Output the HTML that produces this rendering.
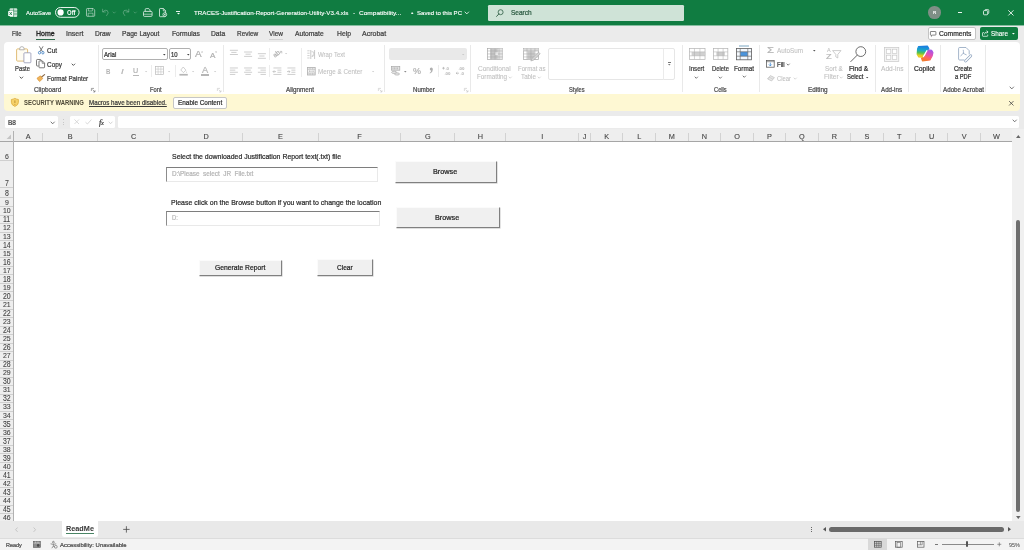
<!DOCTYPE html>
<html><head><meta charset="utf-8"><title>Excel</title>
<style>
html,body{margin:0;padding:0}
body{width:1024px;height:550px;overflow:hidden;position:relative;background:#ebebeb;font-family:"Liberation Sans",sans-serif;}
.t{position:absolute;white-space:pre;line-height:1;transform-origin:0 0;-webkit-text-stroke:0.22px currentColor;}
svg{overflow:visible}
</style></head><body>
<div id="app" style="position:absolute;left:0;top:0;width:1024px;height:550px;will-change:transform;">
<div style="position:absolute;left:0.00px;top:0.00px;width:1024.00px;height:25.00px;background:#107c41;"></div>
<div style="position:absolute;left:0.00px;top:25.00px;width:1024.00px;height:1.00px;background:#86bda0;"></div>
<svg style="position:absolute;left:8.00px;top:7.80px;" width="9.60" height="9.40" viewBox="0 0 9.6 9.4"><rect x="1.6" y=".3" width="7.6" height="8.6" rx="1" fill="#fff" opacity=".78"/>
<path d="M1.6 3.1H9.2M5.6 .3V8.9M5.6 6H9.2" stroke="#107c41" stroke-width=".7" opacity=".8"/>
<rect x=".2" y="2.9" width="5" height="5.2" rx=".7" fill="#fff"/>
<path d="M1.6 4.2L3.8 6.9M3.8 4.2L1.6 6.9" stroke="#107c41" stroke-width=".9"/></svg>
<span class="t" style="left:25.60px;top:10px;font-size:6.2px;color:#ffffff;transform:scaleX(0.9447);-webkit-text-stroke:0.12px currentColor;">AutoSave</span>
<svg style="position:absolute;left:55.00px;top:7.30px;" width="25.00" height="11.00" viewBox="0 0 25 11"><rect x=".5" y=".5" width="23.6" height="9.8" rx="4.9" fill="none" stroke="#fff" stroke-width=".9"/><circle cx="5.6" cy="5.4" r="3.1" fill="#fff"/></svg>
<span class="t" style="left:66.60px;top:10px;font-size:6.6px;color:#ffffff;transform:scaleX(0.9024);font-weight:bold;-webkit-text-stroke:0;">Off</span>
<svg style="position:absolute;left:85.80px;top:8.20px;" width="9.40" height="9.00" viewBox="0 0 9.4 9"><path d="M.5 1.3Q.5 .5 1.3 .5H7.2L8.7 2V7.5Q8.7 8.3 7.9 8.3H1.3Q.5 8.3 .5 7.5Z" fill="none" stroke="#fff" stroke-width=".8" opacity=".68"/>
<path d="M2.4 .6V3H6.4V.6M2.2 8.2V5.2H7V8.2" fill="none" stroke="#fff" stroke-width=".7" opacity=".6"/></svg>
<svg style="position:absolute;left:102.20px;top:8.40px;" width="7.40" height="8.60" viewBox="0 0 7.4 8.6"><path d="M.6 .8V4H3.8" fill="none" stroke="#fff" stroke-width=".8" opacity=".34"/><path d="M.9 3.8Q3 1.2 5.3 2.6Q7.6 4.6 4.4 7.9" fill="none" stroke="#fff" stroke-width=".8" opacity=".34"/></svg>
<svg style="position:absolute;left:111.80px;top:11.20px;" width="4.40" height="3.20" viewBox="0 0 4.4 3.2"><path d="M1 1 L2.20 2.20 L3.40 1" fill="none" stroke="rgba(255,255,255,.3)" stroke-width="0.70" stroke-linecap="round" stroke-linejoin="round"/></svg>
<svg style="position:absolute;left:122.40px;top:8.40px;" width="7.40" height="8.60" viewBox="0 0 7.4 8.6"><path d="M6.8 .8V4H3.6" fill="none" stroke="#fff" stroke-width=".8" opacity=".34"/><path d="M6.5 3.8Q4.4 1.2 2.1 2.6Q-.2 4.6 3 7.9" fill="none" stroke="#fff" stroke-width=".8" opacity=".34"/></svg>
<svg style="position:absolute;left:133.40px;top:11.20px;" width="4.40" height="3.20" viewBox="0 0 4.4 3.2"><path d="M1 1 L2.20 2.20 L3.40 1" fill="none" stroke="rgba(255,255,255,.3)" stroke-width="0.70" stroke-linecap="round" stroke-linejoin="round"/></svg>
<svg style="position:absolute;left:142.60px;top:8.00px;" width="9.60" height="9.00" viewBox="0 0 9.6 9"><path d="M2.2 3.4V1.6Q2.2 .6 3.2 .6H5.2Q6.2 .6 6.6 1.4L7.4 3.4" fill="none" stroke="#fff" stroke-width=".8" opacity=".9"/>
<rect x=".5" y="3.4" width="8.6" height="5" rx="1" fill="none" stroke="#fff" stroke-width=".8" opacity=".9"/><path d="M.6 6.2H9" stroke="#fff" stroke-width=".7" opacity=".8"/></svg>
<svg style="position:absolute;left:158.80px;top:8.00px;" width="8.60" height="9.20" viewBox="0 0 8.6 9.2"><path d="M.5 1.2Q.5 .5 1.2 .5H4.4L6.6 2.7V8Q6.6 8.7 5.9 8.7H1.2Q.5 8.7 .5 8Z" fill="none" stroke="#fff" stroke-width=".8" opacity=".9"/><path d="M4.3 .6V2.9H6.5" fill="none" stroke="#fff" stroke-width=".7" opacity=".9"/>
<circle cx="5.8" cy="6.6" r="1.9" fill="#107c41" stroke="#fff" stroke-width=".7"/><path d="M5.8 5.6V7.4M4.9 6.6H6.7" stroke="#fff" stroke-width=".6"/></svg>
<div style="position:absolute;left:176.40px;top:11.20px;width:3.80px;height:0.80px;background:#fff;opacity:.9"></div>
<svg style="position:absolute;left:176.80px;top:13.15px;" width="3.00" height="1.50" viewBox="0 0 3 1.5"><path d="M0 0 L3.00 0 L1.50 1.50 Z" fill="#fff"/></svg>
<span class="t" style="left:194.30px;top:10px;font-size:6.2px;color:#ffffff;transform:scaleX(1.0022);-webkit-text-stroke:0.12px currentColor;">TRACES-Justification-Report-Generation-Utility-V3.4.xls</span>
<span class="t" style="left:353.20px;top:10px;font-size:6.2px;color:#ffffff;transform:scaleX(1.0654);-webkit-text-stroke:0.12px currentColor;">-</span>
<span class="t" style="left:358.60px;top:10px;font-size:6.2px;color:#ffffff;transform:scaleX(1.0548);-webkit-text-stroke:0.12px currentColor;">Compatibility...</span>
<span class="t" style="left:411.00px;top:10px;font-size:6.2px;color:#ffffff;transform:scaleX(1.1057);-webkit-text-stroke:0.12px currentColor;">•</span>
<span class="t" style="left:416.70px;top:10px;font-size:6.2px;color:#ffffff;transform:scaleX(0.9766);-webkit-text-stroke:0.12px currentColor;">Saved to this PC</span>
<svg style="position:absolute;left:464.40px;top:11.25px;" width="5.60" height="3.90" viewBox="0 0 5.6 3.9"><path d="M1 1 L2.80 2.90 L4.60 1" fill="none" stroke="#fff" stroke-width="0.80" stroke-linecap="round" stroke-linejoin="round"/></svg>
<div style="position:absolute;left:488.00px;top:4.70px;width:196.20px;height:16.30px;background:#cfe3d7;border-radius:1.2px;"></div>
<svg style="position:absolute;left:496.00px;top:9.00px;" width="8.00" height="8.00" viewBox="0 0 8 8"><circle cx="4.6" cy="3.2" r="2.5" fill="none" stroke="#2e5d44" stroke-width=".8"/><path d="M2.8 5L.6 7.4" stroke="#2e5d44" stroke-width=".9" stroke-linecap="round"/></svg>
<span class="t" style="left:510.50px;top:10px;font-size:6.6px;color:#2b5a41;transform:scaleX(0.9898);">Search</span>
<div style="position:absolute;left:928.00px;top:6.30px;width:12.60px;height:12.60px;background:#7f8f86;border-radius:50%;"></div>
<span class="t" style="left:932.70px;top:11px;font-size:4.4px;color:#fff;transform:scaleX(1.0385);font-weight:bold;-webkit-text-stroke:0;">R</span>
<div style="position:absolute;left:957.60px;top:12.00px;width:4.80px;height:0.70px;background:#fff;opacity:.92"></div>
<svg style="position:absolute;left:982.60px;top:9.40px;" width="6.40" height="6.40" viewBox="0 0 6.4 6.4"><rect x=".5" y="1.6" width="4.2" height="4.2" rx=".8" fill="none" stroke="#fff" stroke-width=".8"/><path d="M1.8 1.4Q1.8 .5 2.7 .5H4.9Q5.8 .5 5.8 1.4V3.7Q5.8 4.5 5 4.6" fill="none" stroke="#fff" stroke-width=".7"/></svg>
<svg style="position:absolute;left:1008.00px;top:9.60px;" width="6.00" height="6.00" viewBox="0 0 6 6"><path d="M.6 .6L5.2 5.2M5.2 .6L.6 5.2" stroke="#fff" stroke-width=".85" stroke-linecap="round"/></svg>
<span class="t" style="left:11.80px;top:31px;font-size:6.7px;color:#404040;transform:scaleX(0.8799);">File</span>
<span class="t" style="left:36.30px;top:31px;font-size:6.7px;color:#262626;transform:scaleX(1.0463);-webkit-text-stroke:.32px currentColor;">Home</span>
<span class="t" style="left:65.80px;top:31px;font-size:6.7px;color:#404040;transform:scaleX(1.0444);">Insert</span>
<span class="t" style="left:94.50px;top:31px;font-size:6.7px;color:#404040;transform:scaleX(0.9914);">Draw</span>
<span class="t" style="left:122.00px;top:31px;font-size:6.7px;color:#404040;transform:scaleX(0.9966);">Page Layout</span>
<span class="t" style="left:171.50px;top:31px;font-size:6.7px;color:#404040;transform:scaleX(1.0027);">Formulas</span>
<span class="t" style="left:211.30px;top:31px;font-size:6.7px;color:#404040;transform:scaleX(1.0033);">Data</span>
<span class="t" style="left:236.80px;top:31px;font-size:6.7px;color:#404040;transform:scaleX(0.9650);">Review</span>
<span class="t" style="left:269.00px;top:31px;font-size:6.7px;color:#404040;transform:scaleX(0.9721);">View</span>
<span class="t" style="left:295.30px;top:31px;font-size:6.7px;color:#404040;transform:scaleX(1.0007);">Automate</span>
<span class="t" style="left:336.50px;top:31px;font-size:6.7px;color:#404040;transform:scaleX(1.0160);">Help</span>
<span class="t" style="left:362.30px;top:31px;font-size:6.7px;color:#404040;transform:scaleX(1.0480);">Acrobat</span>
<div style="position:absolute;left:269.40px;top:38.60px;width:13.40px;height:0.80px;background:#d2d2d2;"></div>
<div style="position:absolute;left:35.90px;top:38.70px;width:19.40px;height:1.20px;background:#2f6b4b;"></div>
<div style="position:absolute;left:927.50px;top:27.40px;width:48.20px;height:12.40px;background:#fff;border:1px solid #c4c4c4;border-radius:2px;box-sizing:border-box;"></div>
<svg style="position:absolute;left:930.20px;top:30.60px;" width="6.40" height="6.00" viewBox="0 0 6.4 6"><path d="M.8 .5H5.4Q5.9 .5 5.9 1V3.6Q5.9 4.1 5.4 4.1H2.6L1.4 5.3V4.1H.8Q.4 4.1 .4 3.6V1Q.4 .5 .8 .5Z" fill="none" stroke="#444" stroke-width=".65"/></svg>
<span class="t" style="left:938.80px;top:31px;font-size:6.7px;color:#2f2f2f;transform:scaleX(1.0033);">Comments</span>
<div style="position:absolute;left:979.80px;top:27.40px;width:37.80px;height:12.40px;background:#107c41;border-radius:2px;"></div>
<svg style="position:absolute;left:982.00px;top:30.20px;" width="6.60" height="6.80" viewBox="0 0 6.6 6.8"><path d="M2 2.6H1Q.5 2.6 .5 3.1V5.8Q.5 6.3 1 6.3H5.2Q5.7 6.3 5.7 5.8V4.6" fill="none" stroke="#fff" stroke-width=".7"/><path d="M2.4 4.4Q2.6 2 5 2H6M4.6 .6L6.1 2L4.6 3.4" fill="none" stroke="#fff" stroke-width=".7"/></svg>
<span class="t" style="left:990.90px;top:31px;font-size:6.8px;color:#fff;transform:scaleX(0.9368);-webkit-text-stroke:0.12px currentColor;">Share</span>
<svg style="position:absolute;left:1012.40px;top:33.25px;" width="2.80" height="1.50" viewBox="0 0 2.8 1.5"><path d="M0 0 L2.80 0 L1.40 1.50 Z" fill="#fff"/></svg>
<div style="position:absolute;left:4.40px;top:41.80px;width:1015.80px;height:56.00px;background:#fff;border-radius:4px 4px 0 0;"></div>
<div style="position:absolute;left:97.90px;top:45.20px;width:0.70px;height:47.00px;background:#e9e9e9;"></div>
<div style="position:absolute;left:223.00px;top:45.20px;width:0.70px;height:47.00px;background:#e9e9e9;"></div>
<div style="position:absolute;left:384.30px;top:45.20px;width:0.70px;height:47.00px;background:#e9e9e9;"></div>
<div style="position:absolute;left:470.10px;top:45.20px;width:0.70px;height:47.00px;background:#e9e9e9;"></div>
<div style="position:absolute;left:681.50px;top:45.20px;width:0.70px;height:47.00px;background:#e9e9e9;"></div>
<div style="position:absolute;left:759.30px;top:45.20px;width:0.70px;height:47.00px;background:#e9e9e9;"></div>
<div style="position:absolute;left:874.90px;top:45.20px;width:0.70px;height:47.00px;background:#e9e9e9;"></div>
<div style="position:absolute;left:908.00px;top:45.20px;width:0.70px;height:47.00px;background:#e9e9e9;"></div>
<div style="position:absolute;left:940.00px;top:45.20px;width:0.70px;height:47.00px;background:#e9e9e9;"></div>
<div style="position:absolute;left:984.90px;top:45.20px;width:0.70px;height:47.00px;background:#e9e9e9;"></div>
<svg style="position:absolute;left:15.60px;top:45.60px;" width="16.00" height="17.40" viewBox="0 0 16 17.4"><rect x=".6" y="2.9" width="11" height="12.2" rx="1" fill="#fffcf2" stroke="#dcb668" stroke-width=".9"/>
<path d="M3.6 3.2Q3.6 .6 5.9 .6Q8.2 .6 8.2 3.2V3.8H3.6Z" fill="#fff" stroke="#9a9a9a" stroke-width=".7"/>
<rect x="7.9" y="6.8" width="7" height="10" rx=".8" fill="#fff" stroke="#8c8ead" stroke-width=".75"/></svg>
<span class="t" style="left:14.60px;top:66px;font-size:6.6px;color:#3a3a3a;transform:scaleX(0.8888);">Paste</span>
<svg style="position:absolute;left:19.10px;top:75.50px;" width="4.80" height="3.40" viewBox="0 0 4.8 3.4"><path d="M1 1 L2.40 2.40 L3.80 1" fill="none" stroke="#444" stroke-width="0.90" stroke-linecap="round" stroke-linejoin="round"/></svg>
<svg style="position:absolute;left:37.60px;top:46.20px;" width="6.40" height="8.60" viewBox="0 0 6.4 8.6"><path d="M1.3 .3L4.4 5.6M5.1 .3L2 5.6" stroke="#5a5a5a" stroke-width=".8" fill="none"/><ellipse cx="1.5" cy="6.7" rx="1.1" ry="1.3" fill="none" stroke="#3b7bbf" stroke-width=".8"/><ellipse cx="4.9" cy="6.7" rx="1.1" ry="1.3" fill="none" stroke="#3b7bbf" stroke-width=".8"/></svg>
<span class="t" style="left:47.00px;top:48px;font-size:6.6px;color:#3a3a3a;transform:scaleX(0.9736);">Cut</span>
<svg style="position:absolute;left:36.00px;top:59.20px;" width="9.40" height="9.40" viewBox="0 0 9.4 9.4"><path d="M2.6 7H1.2Q.5 7 .5 6.3V1.2Q.5 .5 1.2 .5H4.4Q5.1 .5 5.1 1.2V1.8" fill="none" stroke="#5a5a5a" stroke-width=".8"/><path d="M3 2.6Q3 1.9 3.7 1.9H6.4L8.6 4.1V8.1Q8.6 8.8 7.9 8.8H3.7Q3 8.8 3 8.1Z" fill="#fff" stroke="#5a5a5a" stroke-width=".8"/><path d="M6.2 2V4.3H8.5" fill="none" stroke="#5a5a5a" stroke-width=".65"/></svg>
<span class="t" style="left:47.00px;top:62px;font-size:6.6px;color:#3a3a3a;transform:scaleX(0.9735);">Copy</span>
<svg style="position:absolute;left:70.60px;top:62.70px;" width="4.80" height="3.40" viewBox="0 0 4.8 3.4"><path d="M1 1 L2.40 2.40 L3.80 1" fill="none" stroke="#444" stroke-width="0.90" stroke-linecap="round" stroke-linejoin="round"/></svg>
<svg style="position:absolute;left:36.20px;top:73.60px;" width="9.60" height="8.40" viewBox="0 0 9.6 8.4"><path d="M5.6 3L8.6 .6" stroke="#8a6a4a" stroke-width="1.2" stroke-linecap="round"/><path d="M1 4.2L4.4 1.8L6.8 4.6L3.6 7.6Q2.4 6.8 1 4.2Z" fill="#f0b45a" stroke="#d48a2a" stroke-width=".6"/></svg>
<span class="t" style="left:47.00px;top:76px;font-size:6.6px;color:#3a3a3a;transform:scaleX(0.9439);">Format Painter</span>
<span class="t" style="left:34.00px;top:87px;font-size:6.5px;color:#484848;transform:scaleX(0.9776);">Clipboard</span>
<svg style="position:absolute;left:90.80px;top:87.60px;" width="4.60" height="4.60" viewBox="0 0 4.6 4.6"><path d="M.4 3V.4H3" fill="none" stroke="#666" stroke-width=".6"/><path d="M1.6 1.6L4 4M4 2.2V4H2.2" fill="none" stroke="#666" stroke-width=".6"/></svg>
<div style="position:absolute;left:102.30px;top:48.30px;width:65.30px;height:12.10px;background:#fff;border:1px solid #b0b0b0;border-radius:2px;box-sizing:border-box;"></div>
<span class="t" style="left:103.70px;top:52px;font-size:6.5px;color:#333;transform:scaleX(0.9459);">Arial</span>
<svg style="position:absolute;left:162.70px;top:54.10px;" width="2.60" height="1.40" viewBox="0 0 2.6 1.4"><path d="M0 0 L2.60 0 L1.30 1.40 Z" fill="#444"/></svg>
<div style="position:absolute;left:169.00px;top:48.30px;width:22.20px;height:12.10px;background:#fff;border:1px solid #b0b0b0;border-radius:2px;box-sizing:border-box;"></div>
<span class="t" style="left:171.00px;top:52px;font-size:6.5px;color:#333;transform:scaleX(0.9128);">10</span>
<svg style="position:absolute;left:186.70px;top:54.10px;" width="2.60" height="1.40" viewBox="0 0 2.6 1.4"><path d="M0 0 L2.60 0 L1.30 1.40 Z" fill="#444"/></svg>
<span class="t" style="left:195.40px;top:50px;font-size:9.0px;color:#b0b0b0;transform:scaleX(1.0994);">A</span>
<span class="t" style="left:201.40px;top:50px;font-size:4.0px;color:#bfbfbf;transform:scaleX(0.9418);-webkit-text-stroke:0.08px currentColor;">˄</span>
<span class="t" style="left:209.80px;top:52px;font-size:7.6px;color:#b0b0b0;transform:scaleX(1.0652);">A</span>
<span class="t" style="left:215.00px;top:50px;font-size:4.0px;color:#bfbfbf;transform:scaleX(0.9418);-webkit-text-stroke:0.08px currentColor;">˅</span>
<span class="t" style="left:106.40px;top:68px;font-size:7.6px;color:#b4b4b4;transform:scaleX(0.8017);font-weight:bold;-webkit-text-stroke:0;">B</span>
<span class="t" style="left:120.60px;top:68px;font-size:7.6px;color:#b4b4b4;transform:scaleX(1.2314);font-style:italic;">I</span>
<span class="t" style="left:133.20px;top:67px;font-size:7.4px;color:#b4b4b4;transform:scaleX(0.9730);">U</span>
<div style="position:absolute;left:132.80px;top:74.60px;width:6.00px;height:0.70px;background:#b8b8b8"></div>
<svg style="position:absolute;left:144.90px;top:70.80px;" width="2.20" height="1.20" viewBox="0 0 2.2 1.2"><path d="M0 0 L2.20 0 L1.10 1.20 Z" fill="#c8c8c8"/></svg>
<div style="position:absolute;left:151.20px;top:65.40px;width:0.60px;height:12.00px;background:#ececec"></div>
<svg style="position:absolute;left:155.00px;top:66.40px;" width="9.00" height="9.00" viewBox="0 0 9 9"><rect x=".4" y=".4" width="8.2" height="8.2" fill="none" stroke="#bcbcbc" stroke-width=".7"/><path d="M3.1 .4V8.6M5.9 .4V8.6M.4 3.1H8.6M.4 5.9H8.6" stroke="#c4c4c4" stroke-width=".6"/></svg>
<svg style="position:absolute;left:168.40px;top:70.80px;" width="2.20" height="1.20" viewBox="0 0 2.2 1.2"><path d="M0 0 L2.20 0 L1.10 1.20 Z" fill="#c8c8c8"/></svg>
<div style="position:absolute;left:175.20px;top:65.40px;width:0.60px;height:12.00px;background:#ececec"></div>
<svg style="position:absolute;left:178.60px;top:66.00px;" width="9.20" height="10.00" viewBox="0 0 9.2 10"><path d="M4.2 1L7 4.2L4.4 6.6L1.8 4Z" fill="none" stroke="#bdbdbd" stroke-width=".7"/><path d="M7.6 5.2Q8.4 6.4 7.6 6.9Q6.8 6.4 7.6 5.2" fill="#bdbdbd"/><rect x=".4" y="7.9" width="8.4" height="1.7" fill="#b6b6b6"/></svg>
<svg style="position:absolute;left:191.90px;top:70.80px;" width="2.20" height="1.20" viewBox="0 0 2.2 1.2"><path d="M0 0 L2.20 0 L1.10 1.20 Z" fill="#c8c8c8"/></svg>
<span class="t" style="left:202.00px;top:66px;font-size:8.4px;color:#b8b8b8;transform:scaleX(1.1065);">A</span>
<div style="position:absolute;left:200.80px;top:73.90px;width:8.60px;height:1.70px;background:#b6b6b6"></div>
<svg style="position:absolute;left:213.50px;top:70.80px;" width="2.20" height="1.20" viewBox="0 0 2.2 1.2"><path d="M0 0 L2.20 0 L1.10 1.20 Z" fill="#c8c8c8"/></svg>
<span class="t" style="left:150.40px;top:87px;font-size:6.5px;color:#484848;transform:scaleX(0.8919);">Font</span>
<svg style="position:absolute;left:217.00px;top:87.60px;" width="4.60" height="4.60" viewBox="0 0 4.6 4.6"><path d="M.4 3V.4H3" fill="none" stroke="#c4c4c4" stroke-width=".6"/><path d="M1.6 1.6L4 4M4 2.2V4H2.2" fill="none" stroke="#c4c4c4" stroke-width=".6"/></svg>
<svg style="position:absolute;left:0;top:0" width="1024" height="120"><path d="M229.90 50.30H237.90M231.30 52.40H236.50M229.90 54.50H237.90" stroke="#bdbdbd" stroke-width="0.75" fill="none"/></svg>
<svg style="position:absolute;left:0;top:0" width="1024" height="120"><path d="M244.10 52.00H252.10M245.50 54.20H250.70M244.10 56.40H252.10" stroke="#bdbdbd" stroke-width="0.75" fill="none"/></svg>
<svg style="position:absolute;left:0;top:0" width="1024" height="120"><path d="M257.90 53.70H265.90M259.30 56.00H264.50M257.90 58.30H265.90" stroke="#bdbdbd" stroke-width="0.75" fill="none"/></svg>
<div style="position:absolute;left:269.30px;top:47.60px;width:0.60px;height:12.40px;background:#ececec"></div>
<span class="t" style="left:273.20px;top:51px;font-size:6.3px;color:#b0b0b0;transform:scaleX(0.9418);transform:rotate(-40deg) scaleX(1);transform-origin:50% 50%;">ab</span>
<svg style="position:absolute;left:276.60px;top:50.40px;" width="6.00" height="6.00" viewBox="0 0 6 6"><path d="M.5 5.4L4.6 1.6M2.8 1.4H4.8V3.4" fill="none" stroke="#b4b4b4" stroke-width=".7"/></svg>
<svg style="position:absolute;left:285.20px;top:53.40px;" width="2.20" height="1.20" viewBox="0 0 2.2 1.2"><path d="M0 0 L2.20 0 L1.10 1.20 Z" fill="#c8c8c8"/></svg>
<div style="position:absolute;left:300.80px;top:47.60px;width:0.60px;height:29.60px;background:#ececec"></div>
<svg style="position:absolute;left:307.20px;top:49.80px;" width="8.40" height="9.40" viewBox="0 0 8.4 9.4"><path d="M.3 .8H2.6M.3 3.2H2.6M.3 5.6H2.6M.3 8H2.6" stroke="#bdbdbd" stroke-width=".7"/><path d="M3.8 0V9M7.6 0V9" stroke="#b8b8b8" stroke-width=".75"/><path d="M4.6 1.8H6Q6.8 1.8 6.8 2.6V5.2Q6.8 6 6 6H5M5.7 5.1L4.8 6L5.7 6.9" fill="none" stroke="#b8b8b8" stroke-width=".65"/></svg>
<span class="t" style="left:318.00px;top:52px;font-size:6.6px;color:#bfbfbf;transform:scaleX(0.9162);-webkit-text-stroke:0.08px currentColor;">Wrap Text</span>
<svg style="position:absolute;left:0;top:0" width="1024" height="120"><path d="M229.90 67.98H237.90M229.90 70.13H235.30M229.90 72.28H237.90M229.90 74.43H235.30" stroke="#bdbdbd" stroke-width="0.75" fill="none"/></svg>
<svg style="position:absolute;left:0;top:0" width="1024" height="120"><path d="M244.10 67.98H252.10M245.40 70.13H250.80M244.10 72.28H252.10M245.40 74.43H250.80" stroke="#bdbdbd" stroke-width="0.75" fill="none"/></svg>
<svg style="position:absolute;left:0;top:0" width="1024" height="120"><path d="M257.90 67.98H265.90M260.50 70.13H265.90M257.90 72.28H265.90M260.50 74.43H265.90" stroke="#bdbdbd" stroke-width="0.75" fill="none"/></svg>
<div style="position:absolute;left:269.30px;top:65.00px;width:0.60px;height:12.40px;background:#ececec"></div>
<svg style="position:absolute;left:0;top:0" width="1024" height="120"><path d="M273.40 67.98H281.40M277.40 70.13H281.40M277.40 72.28H281.40M273.40 74.43H281.40" stroke="#bdbdbd" stroke-width="0.75" fill="none"/></svg>
<svg style="position:absolute;left:273.20px;top:69.60px;" width="3.40" height="3.20" viewBox="0 0 3.4 3.2"><path d="M3 1.6H0M1.2 .4L0 1.6L1.2 2.8" fill="none" stroke="#b4b4b4" stroke-width=".7"/></svg>
<svg style="position:absolute;left:0;top:0" width="1024" height="120"><path d="M287.40 67.98H295.40M291.40 70.13H295.40M291.40 72.28H295.40M287.40 74.43H295.40" stroke="#bdbdbd" stroke-width="0.75" fill="none"/></svg>
<svg style="position:absolute;left:287.20px;top:69.60px;" width="3.40" height="3.20" viewBox="0 0 3.4 3.2"><path d="M0 1.6H3M1.8 .4L3 1.6L1.8 2.8" fill="none" stroke="#b4b4b4" stroke-width=".7"/></svg>
<svg style="position:absolute;left:306.50px;top:67.00px;" width="8.60" height="8.40" viewBox="0 0 8.6 8.4"><rect x=".4" y=".4" width="7.8" height="7.6" fill="#e9e9e9" stroke="#b0b0b0" stroke-width=".8"/><rect x="1.4" y="2.6" width="5.8" height="3.2" fill="#fafafa"/><path d="M.4 2.4H8.2M.4 6H8.2M3 .4V2.4M5.6 .4V2.4M3 6V8M5.6 6V8" stroke="#b8b8b8" stroke-width=".6"/><path d="M2 4.2H6.6M2.8 3.5L2 4.2L2.8 4.9M5.8 3.5L6.6 4.2L5.8 4.9" fill="none" stroke="#b0b0b0" stroke-width=".6"/></svg>
<span class="t" style="left:318.00px;top:69px;font-size:6.6px;color:#bfbfbf;transform:scaleX(0.9509);-webkit-text-stroke:0.08px currentColor;">Merge &amp; Center</span>
<svg style="position:absolute;left:372.30px;top:71.00px;" width="2.20" height="1.20" viewBox="0 0 2.2 1.2"><path d="M0 0 L2.20 0 L1.10 1.20 Z" fill="#c8c8c8"/></svg>
<span class="t" style="left:285.70px;top:87px;font-size:6.5px;color:#484848;transform:scaleX(0.9687);">Alignment</span>
<svg style="position:absolute;left:378.40px;top:87.60px;" width="4.60" height="4.60" viewBox="0 0 4.6 4.6"><path d="M.4 3V.4H3" fill="none" stroke="#c4c4c4" stroke-width=".6"/><path d="M1.6 1.6L4 4M4 2.2V4H2.2" fill="none" stroke="#c4c4c4" stroke-width=".6"/></svg>
<div style="position:absolute;left:389.40px;top:48.30px;width:77.40px;height:12.10px;background:#e9e9e9;border-radius:2px;"></div>
<svg style="position:absolute;left:461.80px;top:54.15px;" width="2.40" height="1.30" viewBox="0 0 2.4 1.3"><path d="M0 0 L2.40 0 L1.20 1.30 Z" fill="#c6c6c6"/></svg>
<svg style="position:absolute;left:391.00px;top:66.40px;" width="9.40" height="9.80" viewBox="0 0 9.4 9.8"><rect x=".4" y=".6" width="8.4" height="3.6" fill="#e4e4e4" stroke="#a8a8a8" stroke-width=".7"/><path d="M2 1.4V3.4M3.5 1.4V3.4M5 1.4V3.4M6.5 1.4V3.4" stroke="#a8a8a8" stroke-width=".6"/><ellipse cx="3.2" cy="6.4" rx="2.6" ry="1.1" fill="#e8e8e8" stroke="#a8a8a8" stroke-width=".65"/><ellipse cx="6" cy="8" rx="2.6" ry="1.1" fill="#e8e8e8" stroke="#a8a8a8" stroke-width=".65"/></svg>
<svg style="position:absolute;left:403.70px;top:70.70px;" width="2.60" height="1.40" viewBox="0 0 2.6 1.4"><path d="M0 0 L2.60 0 L1.30 1.40 Z" fill="#8a8a8a"/></svg>
<span class="t" style="left:413.00px;top:67px;font-size:8.6px;color:#b2b2b2;transform:scaleX(1.0462);">%</span>
<svg style="position:absolute;left:429.00px;top:67.40px;" width="4.40" height="7.40" viewBox="0 0 4.4 7.4"><path d="M2.3 .4Q3.9 .4 3.9 2.4Q3.9 5 1 6.6L.6 6Q2.2 4.8 2.2 3.6Q.8 3.6 .8 2Q.8 .4 2.3 .4Z" fill="#b0b0b0"/></svg>
<div style="position:absolute;left:438.00px;top:65.40px;width:0.60px;height:12.00px;background:#ececec"></div>
<svg style="position:absolute;left:442.00px;top:66.40px;" width="9.40" height="9.80" viewBox="0 0 9.4 9.8"><path d="M.2 2.2H2.8M1.5 .9V3.5" stroke="#adadad" stroke-width=".7"/><text x="3.4" y="4" font-size="4.4" font-weight="bold" fill="#b2b2b2" font-family="Liberation Sans">.0</text><text x="2.4" y="9" font-size="4.4" font-weight="bold" fill="#b2b2b2" font-family="Liberation Sans">.00</text></svg>
<svg style="position:absolute;left:456.00px;top:66.40px;" width="9.40" height="9.80" viewBox="0 0 9.4 9.8"><text x="2.4" y="4" font-size="4.4" font-weight="bold" fill="#b2b2b2" font-family="Liberation Sans">.00</text><path d="M.2 7.2H3M1.3 6.1L.2 7.2L1.3 8.3" fill="none" stroke="#adadad" stroke-width=".7"/><text x="4.4" y="9" font-size="4.4" font-weight="bold" fill="#b2b2b2" font-family="Liberation Sans">.0</text></svg>
<span class="t" style="left:412.60px;top:87px;font-size:6.5px;color:#484848;transform:scaleX(0.9386);">Number</span>
<svg style="position:absolute;left:464.40px;top:87.60px;" width="4.60" height="4.60" viewBox="0 0 4.6 4.6"><path d="M.4 3V.4H3" fill="none" stroke="#c4c4c4" stroke-width=".6"/><path d="M1.6 1.6L4 4M4 2.2V4H2.2" fill="none" stroke="#c4c4c4" stroke-width=".6"/></svg>
<svg style="position:absolute;left:487.20px;top:48.00px;" width="16.00" height="11.90" viewBox="0 0 16 11.9"><rect x=".35" y=".35" width="15.30" height="11.20" fill="#fff" stroke="#a8a8a8" stroke-width=".7"/><rect x="3.20" y="0.60" width="7.60" height="10.60" fill="#c6c6c6"/><rect x="8.00" y="4.60" width="3.40" height="2.40" fill="#ffffff"/><rect x="11.20" y="0.60" width="4.20" height="10.60" fill="#e6e6e6"/><path d="M4.00 .4V11.50" stroke="#a8a8a8" stroke-width=".55"/><path d="M8.00 .4V11.50" stroke="#a8a8a8" stroke-width=".55"/><path d="M12.00 .4V11.50" stroke="#a8a8a8" stroke-width=".55"/><path d="M.4 2.98H15.60" stroke="#a8a8a8" stroke-width=".55"/><path d="M.4 5.95H15.60" stroke="#a8a8a8" stroke-width=".55"/><path d="M.4 8.93H15.60" stroke="#a8a8a8" stroke-width=".55"/></svg>
<span class="t" style="left:478.40px;top:66px;font-size:6.6px;color:#bfbfbf;transform:scaleX(0.9902);-webkit-text-stroke:0.08px currentColor;">Conditional</span>
<span class="t" style="left:476.50px;top:74px;font-size:6.6px;color:#bfbfbf;transform:scaleX(0.9542);-webkit-text-stroke:0.08px currentColor;">Formatting</span>
<svg style="position:absolute;left:508.20px;top:75.60px;" width="4.40" height="3.20" viewBox="0 0 4.4 3.2"><path d="M1 1 L2.20 2.20 L3.40 1" fill="none" stroke="#c4c4c4" stroke-width="0.65" stroke-linecap="round" stroke-linejoin="round"/></svg>
<svg style="position:absolute;left:523.20px;top:48.00px;" width="15.90" height="11.90" viewBox="0 0 15.9 11.9"><rect x=".35" y=".35" width="15.20" height="11.20" fill="#fff" stroke="#a8a8a8" stroke-width=".7"/><rect x="4.40" y="3.20" width="7.20" height="8.00" fill="#cacaca"/><rect x="0.50" y="0.50" width="14.90" height="2.60" fill="#dcdcdc"/><path d="M3.98 .4V11.50" stroke="#a8a8a8" stroke-width=".55"/><path d="M7.95 .4V11.50" stroke="#a8a8a8" stroke-width=".55"/><path d="M11.93 .4V11.50" stroke="#a8a8a8" stroke-width=".55"/><path d="M.4 2.98H15.50" stroke="#a8a8a8" stroke-width=".55"/><path d="M.4 5.95H15.50" stroke="#a8a8a8" stroke-width=".55"/><path d="M.4 8.93H15.50" stroke="#a8a8a8" stroke-width=".55"/></svg>
<svg style="position:absolute;left:529.60px;top:50.60px;" width="11.00" height="11.00" viewBox="0 0 11 11"><path d="M.8 10L1.8 7.6L8.6 1.2L10.2 2.8L3.4 9.2Z" fill="#d4d4d4" stroke="#a8a8a8" stroke-width=".6"/></svg>
<span class="t" style="left:517.50px;top:66px;font-size:6.6px;color:#bfbfbf;transform:scaleX(0.9257);-webkit-text-stroke:0.08px currentColor;">Format as</span>
<span class="t" style="left:521.00px;top:74px;font-size:6.6px;color:#bfbfbf;transform:scaleX(0.9507);-webkit-text-stroke:0.08px currentColor;">Table</span>
<svg style="position:absolute;left:537.20px;top:75.60px;" width="4.40" height="3.20" viewBox="0 0 4.4 3.2"><path d="M1 1 L2.20 2.20 L3.40 1" fill="none" stroke="#c4c4c4" stroke-width="0.65" stroke-linecap="round" stroke-linejoin="round"/></svg>
<div style="position:absolute;left:548.40px;top:48.30px;width:127.00px;height:31.80px;background:#fff;border:0.7px solid #e6e6e6;border-radius:2px;box-sizing:border-box;"></div>
<div style="position:absolute;left:663.40px;top:48.60px;width:0.60px;height:31.20px;background:#ebebeb"></div>
<div style="position:absolute;left:667.50px;top:62.20px;width:3.00px;height:0.60px;background:#777"></div>
<svg style="position:absolute;left:667.70px;top:63.60px;" width="2.60" height="1.40" viewBox="0 0 2.6 1.4"><path d="M0 0 L2.60 0 L1.30 1.40 Z" fill="#777"/></svg>
<span class="t" style="left:568.80px;top:87px;font-size:6.5px;color:#484848;transform:scaleX(0.8813);">Styles</span>
<svg style="position:absolute;left:689.20px;top:48.10px;" width="16.40" height="11.70" viewBox="0 0 16.4 11.7"><rect x=".35" y=".35" width="15.70" height="11.00" fill="#fff" stroke="#b2b2b2" stroke-width=".7"/><rect x="2.60" y="3.90" width="13.80" height="3.90" fill="#d0d0d0"/><path d="M5.47 .4V11.30" stroke="#b2b2b2" stroke-width=".55"/><path d="M10.93 .4V11.30" stroke="#b2b2b2" stroke-width=".55"/><path d="M.4 3.90H16.00" stroke="#b2b2b2" stroke-width=".55"/><path d="M.4 7.80H16.00" stroke="#b2b2b2" stroke-width=".55"/></svg>
<span class="t" style="left:689.00px;top:66px;font-size:6.6px;color:#3a3a3a;transform:scaleX(0.9269);">Insert</span>
<svg style="position:absolute;left:694.40px;top:75.55px;" width="4.60" height="3.30" viewBox="0 0 4.6 3.3"><path d="M1 1 L2.30 2.30 L3.60 1" fill="none" stroke="#555" stroke-width="0.80" stroke-linecap="round" stroke-linejoin="round"/></svg>
<svg style="position:absolute;left:713.00px;top:48.10px;" width="15.20" height="11.70" viewBox="0 0 15.2 11.7"><rect x=".35" y=".35" width="14.50" height="11.00" fill="#fff" stroke="#b2b2b2" stroke-width=".7"/><rect x="3.40" y="3.90" width="8.40" height="3.90" fill="#cccccc"/><path d="M5.07 .4V11.30" stroke="#b2b2b2" stroke-width=".55"/><path d="M10.13 .4V11.30" stroke="#b2b2b2" stroke-width=".55"/><path d="M.4 3.90H14.80" stroke="#b2b2b2" stroke-width=".55"/><path d="M.4 7.80H14.80" stroke="#b2b2b2" stroke-width=".55"/></svg>
<span class="t" style="left:712.00px;top:66px;font-size:6.6px;color:#3a3a3a;transform:scaleX(0.8910);">Delete</span>
<svg style="position:absolute;left:718.00px;top:75.55px;" width="4.60" height="3.30" viewBox="0 0 4.6 3.3"><path d="M1 1 L2.30 2.30 L3.60 1" fill="none" stroke="#555" stroke-width="0.80" stroke-linecap="round" stroke-linejoin="round"/></svg>
<div style="position:absolute;left:739.30px;top:45.00px;width:9.40px;height:1.70px;background:#bcd2e0"></div>
<svg style="position:absolute;left:736.20px;top:47.60px;" width="16.00" height="12.20" viewBox="0 0 16 12.2"><rect x=".4" y=".4" width="15.2" height="11.4" fill="#f4f9fe" stroke="#5e5e5e" stroke-width=".8"/><rect x="4.3" y="3.8" width="7.4" height="4.4" fill="#4a94dc"/><path d="M4.2 .4V11.8M11.8 .4V11.8M.4 3.8H15.6M.4 8.2H15.6" stroke="#666" stroke-width=".65"/></svg>
<span class="t" style="left:734.00px;top:66px;font-size:6.6px;color:#3a3a3a;transform:scaleX(0.9568);">Format</span>
<svg style="position:absolute;left:741.50px;top:74.95px;" width="4.60" height="3.30" viewBox="0 0 4.6 3.3"><path d="M1 1 L2.30 2.30 L3.60 1" fill="none" stroke="#555" stroke-width="0.80" stroke-linecap="round" stroke-linejoin="round"/></svg>
<span class="t" style="left:714.30px;top:87px;font-size:6.5px;color:#484848;transform:scaleX(0.8790);">Cells</span>
<span class="t" style="left:767.00px;top:45px;font-size:9.6px;color:#b4b4b4;transform:scaleX(1.1795);">Σ</span>
<span class="t" style="left:777.30px;top:48px;font-size:6.6px;color:#bfbfbf;transform:scaleX(0.9614);-webkit-text-stroke:0.08px currentColor;">AutoSum</span>
<svg style="position:absolute;left:813.30px;top:49.90px;" width="2.60" height="1.40" viewBox="0 0 2.6 1.4"><path d="M0 0 L2.60 0 L1.30 1.40 Z" fill="#555"/></svg>
<svg style="position:absolute;left:766.20px;top:60.40px;" width="8.60" height="7.60" viewBox="0 0 8.6 7.6"><rect x=".4" y=".4" width="7.8" height="6.8" fill="#fff" stroke="#555" stroke-width=".75"/><path d="M.4 1.7H8.2" stroke="#555" stroke-width=".6"/><path d="M4.3 2.6V5.8M2.9 4.5L4.3 5.9L5.7 4.5" fill="none" stroke="#2f7fd0" stroke-width=".75"/></svg>
<span class="t" style="left:777.30px;top:62px;font-size:6.6px;color:#3a3a3a;transform:scaleX(0.9133);">Fill</span>
<svg style="position:absolute;left:786.40px;top:63.00px;" width="4.40" height="3.20" viewBox="0 0 4.4 3.2"><path d="M1 1 L2.20 2.20 L3.40 1" fill="none" stroke="#444" stroke-width="0.70" stroke-linecap="round" stroke-linejoin="round"/></svg>
<svg style="position:absolute;left:766.60px;top:74.60px;" width="8.00" height="6.60" viewBox="0 0 8 6.6"><path d="M3.4 .6L7.4 2.6L4.6 6L.6 4Z" fill="#e8e8e8" stroke="#bdbdbd" stroke-width=".65"/><path d="M.6 4L2.2 2.2L6 4.2" fill="none" stroke="#bdbdbd" stroke-width=".5"/></svg>
<span class="t" style="left:777.30px;top:76px;font-size:6.6px;color:#bfbfbf;transform:scaleX(0.8876);-webkit-text-stroke:0.08px currentColor;">Clear</span>
<svg style="position:absolute;left:792.80px;top:76.80px;" width="4.40" height="3.20" viewBox="0 0 4.4 3.2"><path d="M1 1 L2.20 2.20 L3.40 1" fill="none" stroke="#c4c4c4" stroke-width="0.65" stroke-linecap="round" stroke-linejoin="round"/></svg>
<span class="t" style="left:826.60px;top:48px;font-size:5.0px;color:#bfbfbf;transform:scaleX(1.0794);-webkit-text-stroke:0.08px currentColor;">A</span>
<span class="t" style="left:826.00px;top:53px;font-size:7.4px;color:#b4b4b4;transform:scaleX(1.2388);">Z</span>
<svg style="position:absolute;left:832.40px;top:49.60px;" width="9.60" height="9.00" viewBox="0 0 9.6 9"><path d="M.6 .6H9L5.8 4.4V8L3.8 6.8V4.4Z" fill="none" stroke="#b8b8b8" stroke-width=".7"/></svg>
<span class="t" style="left:824.80px;top:66px;font-size:6.6px;color:#bfbfbf;transform:scaleX(0.9705);-webkit-text-stroke:0.08px currentColor;">Sort &amp;</span>
<span class="t" style="left:823.80px;top:74px;font-size:6.6px;color:#bfbfbf;transform:scaleX(0.9954);-webkit-text-stroke:0.08px currentColor;">Filter</span>
<svg style="position:absolute;left:838.80px;top:75.80px;" width="4.40" height="3.20" viewBox="0 0 4.4 3.2"><path d="M1 1 L2.20 2.20 L3.40 1" fill="none" stroke="#c4c4c4" stroke-width="0.65" stroke-linecap="round" stroke-linejoin="round"/></svg>
<svg style="position:absolute;left:849.60px;top:46.00px;" width="17.00" height="16.40" viewBox="0 0 17 16.4"><circle cx="10.8" cy="5.6" r="4.9" fill="none" stroke="#555" stroke-width=".85"/><path d="M7.2 9.2L.8 15.6" stroke="#555" stroke-width=".9" stroke-linecap="round"/></svg>
<span class="t" style="left:848.60px;top:66px;font-size:6.6px;color:#2e2e2e;transform:scaleX(1.0013);">Find &amp;</span>
<span class="t" style="left:847.00px;top:74px;font-size:6.6px;color:#2e2e2e;transform:scaleX(0.8940);">Select</span>
<svg style="position:absolute;left:865.60px;top:76.75px;" width="2.40" height="1.30" viewBox="0 0 2.4 1.3"><path d="M0 0 L2.40 0 L1.20 1.30 Z" fill="#444"/></svg>
<span class="t" style="left:807.90px;top:87px;font-size:6.5px;color:#484848;transform:scaleX(0.9811);">Editing</span>
<svg style="position:absolute;left:884.20px;top:46.60px;" width="15.20" height="14.80" viewBox="0 0 15.2 14.8"><rect x=".4" y=".4" width="14.4" height="14" fill="#f4f4f4" stroke="#c8c8c8" stroke-width=".7"/><rect x="2.4" y="2.2" width="4.4" height="4.4" fill="#fff" stroke="#c4c4c4" stroke-width=".6"/><rect x="8.4" y="2.2" width="4.4" height="4.4" fill="#fff" stroke="#c4c4c4" stroke-width=".6"/><rect x="2.4" y="8.2" width="4.4" height="4.4" fill="#fff" stroke="#c4c4c4" stroke-width=".6"/><rect x="8.4" y="8.2" width="4.4" height="4.4" fill="#fff" stroke="#c4c4c4" stroke-width=".6"/></svg>
<span class="t" style="left:880.50px;top:66px;font-size:6.6px;color:#bfbfbf;transform:scaleX(1.0054);-webkit-text-stroke:0.08px currentColor;">Add-ins</span>
<span class="t" style="left:881.00px;top:87px;font-size:6.5px;color:#484848;transform:scaleX(0.9528);">Add-ins</span>
<svg style="position:absolute;left:917.00px;top:46.40px;" width="16.00" height="15.00" viewBox="0 0 16 15"><defs><linearGradient id="cg1" x1="0.3" y1="0" x2="0.2" y2="1"><stop offset="0" stop-color="#1b7fe0"/><stop offset=".35" stop-color="#18a8c8"/><stop offset=".6" stop-color="#52c050"/><stop offset=".85" stop-color="#e6d21e"/><stop offset="1" stop-color="#f0c020"/></linearGradient><linearGradient id="cg2" x1="0.7" y1="0" x2="0.3" y2="1"><stop offset="0" stop-color="#a455e6"/><stop offset=".4" stop-color="#e44fb4"/><stop offset=".75" stop-color="#ff6a52"/><stop offset="1" stop-color="#f07a2a"/></linearGradient></defs>
<path d="M9.8 6.1L11.1 3.9L14.6 4.4L15.9 6.55L15.1 10L12.9 14L5.5 14.85L4.6 12.2L8.5 10Z" fill="url(#cg2)" stroke="url(#cg2)" stroke-width="1.2" stroke-linejoin="round"/>
<path d="M1.5 .6L10.5 .2L11.8 2.6L8.3 5.7L5.4 11.2L1.6 10.8L.2 8.3L.6 3.05Z" fill="url(#cg1)" stroke="url(#cg1)" stroke-width="1.2" stroke-linejoin="round"/>
<path d="M9.9 4.6L6.4 10.6" stroke="#fff" stroke-width="1.1" stroke-linecap="round"/></svg>
<span class="t" style="left:914.00px;top:66px;font-size:6.6px;color:#2e2e2e;transform:scaleX(1.0221);">Copilot</span>
<svg style="position:absolute;left:957.60px;top:46.80px;" width="15.00" height="15.40" viewBox="0 0 15 15.4"><path d="M11.2 7.4V3.7L8 .5H1.6Q.6 .5 .6 1.5V12Q.6 13 1.6 13H6.4" fill="none" stroke="#8da2bd" stroke-width=".8"/>
<path d="M5.4 6.2Q5.6 4.6 5.3 3.2M5.4 6.2Q4.2 7.8 2.8 8.8M5.4 6.2Q6.8 7.4 8.2 7.8" fill="none" stroke="#8da2bd" stroke-width=".75" stroke-linecap="round"/>
<path d="M12.8 8.8L7.6 14" stroke="#8da2bd" stroke-width="2.7" stroke-linecap="round"/><path d="M12.8 8.8L7.6 14" stroke="#fff" stroke-width="1.3" stroke-linecap="round"/></svg>
<span class="t" style="left:954.30px;top:66px;font-size:6.6px;color:#2e2e2e;transform:scaleX(0.9137);">Create</span>
<span class="t" style="left:955.00px;top:74px;font-size:6.6px;color:#2e2e2e;transform:scaleX(0.8714);">a PDF</span>
<span class="t" style="left:942.70px;top:87px;font-size:6.5px;color:#484848;transform:scaleX(0.9591);">Adobe Acrobat</span>
<svg style="position:absolute;left:1009.20px;top:85.85px;" width="5.60" height="3.90" viewBox="0 0 5.6 3.9"><path d="M1 1 L2.80 2.90 L4.60 1" fill="none" stroke="#555" stroke-width="0.80" stroke-linecap="round" stroke-linejoin="round"/></svg>
<div style="position:absolute;left:4.40px;top:94.40px;width:1015.80px;height:16.40px;background:#fef8d3;border-radius:0 0 4px 4px;"></div>
<svg style="position:absolute;left:11.00px;top:98.40px;" width="8.00" height="8.80" viewBox="0 0 8 8.8"><path d="M3.9 .4Q5.6 1.3 7.4 1.5V4.4Q7.4 7 3.9 8.4Q.4 7 .4 4.4V1.5Q2.2 1.3 3.9 .4Z" fill="#f6d26a" stroke="#dcab3c" stroke-width=".8"/><path d="M3.9 2.4V5" stroke="#b98c2c" stroke-width=".9"/><circle cx="3.9" cy="6.2" r=".5" fill="#b98c2c"/></svg>
<span class="t" style="left:23.60px;top:100px;font-size:6.9px;color:#4d4836;transform:scaleX(0.8568);font-weight:bold;-webkit-text-stroke:0;">SECURITY WARNING</span>
<span class="t" style="left:88.80px;top:100px;font-size:6.5px;color:#3a3a3a;transform:scaleX(0.9569);text-decoration:underline;text-decoration-thickness:.6px;text-underline-offset:1px;">Macros have been disabled.</span>
<div style="position:absolute;left:173.40px;top:96.60px;width:53.80px;height:12.20px;background:#fff;border:1px solid #c6c6c6;border-radius:2px;box-sizing:border-box;"></div>
<span class="t" style="left:178.00px;top:100px;font-size:6.6px;color:#2e2e2e;transform:scaleX(0.9714);">Enable Content</span>
<svg style="position:absolute;left:1009.00px;top:100.60px;" width="4.60" height="4.60" viewBox="0 0 4.6 4.6"><path d="M.4 .4L4.2 4.2M4.2 .4L.4 4.2" stroke="#444" stroke-width=".8" stroke-linecap="round"/></svg>
<div style="position:absolute;left:5.10px;top:116.00px;width:53.00px;height:12.00px;background:#fff;border-radius:1.5px;"></div>
<span class="t" style="left:7.90px;top:120px;font-size:6.9px;color:#3a3a3a;transform:scaleX(0.9479);">B8</span>
<svg style="position:absolute;left:49.50px;top:120.50px;" width="5.40" height="3.80" viewBox="0 0 5.4 3.8"><path d="M1 1 L2.70 2.80 L4.40 1" fill="none" stroke="#555" stroke-width="0.80" stroke-linecap="round" stroke-linejoin="round"/></svg>
<div style="position:absolute;left:63.40px;top:119.40px;width:1.00px;height:1.00px;background:#bdbdbd;border-radius:50%;"></div>
<div style="position:absolute;left:63.40px;top:121.90px;width:1.00px;height:1.00px;background:#bdbdbd;border-radius:50%;"></div>
<div style="position:absolute;left:63.40px;top:124.40px;width:1.00px;height:1.00px;background:#bdbdbd;border-radius:50%;"></div>
<div style="position:absolute;left:70.00px;top:116.00px;width:44.60px;height:12.00px;background:#fff;border-radius:1.5px;"></div>
<svg style="position:absolute;left:73.60px;top:119.40px;" width="5.60" height="5.60" viewBox="0 0 5.6 5.6"><path d="M.5 .5L5 5M5 .5L.5 5" stroke="#cfcfcf" stroke-width=".8"/></svg>
<svg style="position:absolute;left:85.00px;top:119.40px;" width="7.00" height="5.60" viewBox="0 0 7 5.6"><path d="M.5 3.2L2.4 5L6.4 .6" fill="none" stroke="#cfcfcf" stroke-width=".8"/></svg>
<span class="t" style="left:98.60px;top:119px;font-size:7.6px;color:#444;transform:scaleX(1.1367);font-style:italic;font-family:'Liberation Serif',serif;">f</span>
<span class="t" style="left:101.40px;top:121px;font-size:5.6px;color:#444;transform:scaleX(1.1429);font-style:italic;font-family:'Liberation Serif',serif;">x</span>
<svg style="position:absolute;left:108.00px;top:120.55px;" width="5.20" height="3.70" viewBox="0 0 5.2 3.7"><path d="M1 1 L2.60 2.70 L4.20 1" fill="none" stroke="#c4c4c4" stroke-width="0.75" stroke-linecap="round" stroke-linejoin="round"/></svg>
<div style="position:absolute;left:118.20px;top:116.00px;width:901.00px;height:12.00px;background:#fff;border-radius:1.5px;"></div>
<svg style="position:absolute;left:1012.00px;top:119.30px;" width="5.40" height="3.80" viewBox="0 0 5.4 3.8"><path d="M1 1 L2.70 2.80 L4.40 1" fill="none" stroke="#555" stroke-width="0.80" stroke-linecap="round" stroke-linejoin="round"/></svg>
<div style="position:absolute;left:0.00px;top:129.20px;width:1012.40px;height:12.00px;background:#eeeeee;"></div>
<div style="position:absolute;left:0.00px;top:141.20px;width:13.40px;height:380.00px;background:#eeeeee;"></div>
<div style="position:absolute;left:13.40px;top:141.20px;width:999.00px;height:380.00px;background:#fff;"></div>
<div style="position:absolute;left:0.00px;top:140.70px;width:1012.40px;height:0.80px;background:#a6a6a6;"></div>
<div style="position:absolute;left:13.05px;top:131.00px;width:0.70px;height:390.20px;background:#b2b2b2;"></div>
<svg style="position:absolute;left:6.40px;top:133.60px;" width="5.60" height="5.60" viewBox="0 0 5.6 5.6"><path d="M5 .6V5H.6Z" fill="#c4c4c4"/></svg>
<span class="t" style="left:25.82px;top:133px;font-size:7.3px;color:#444;transform:scaleX(1.0000);-webkit-text-stroke:.1px currentColor;">A</span>
<div style="position:absolute;left:42.30px;top:132.60px;width:0.70px;height:8.00px;background:#d2d2d2;"></div>
<span class="t" style="left:67.77px;top:133px;font-size:7.3px;color:#444;transform:scaleX(1.0000);-webkit-text-stroke:.1px currentColor;">B</span>
<div style="position:absolute;left:96.90px;top:132.60px;width:0.70px;height:8.00px;background:#d2d2d2;"></div>
<span class="t" style="left:130.91px;top:133px;font-size:7.3px;color:#444;transform:scaleX(1.0000);-webkit-text-stroke:.1px currentColor;">C</span>
<div style="position:absolute;left:169.00px;top:132.60px;width:0.70px;height:8.00px;background:#d2d2d2;"></div>
<span class="t" style="left:203.51px;top:133px;font-size:7.3px;color:#444;transform:scaleX(1.0000);-webkit-text-stroke:.1px currentColor;">D</span>
<div style="position:absolute;left:242.10px;top:132.60px;width:0.70px;height:8.00px;background:#d2d2d2;"></div>
<span class="t" style="left:278.12px;top:133px;font-size:7.3px;color:#444;transform:scaleX(1.0000);-webkit-text-stroke:.1px currentColor;">E</span>
<div style="position:absolute;left:317.80px;top:132.60px;width:0.70px;height:8.00px;background:#d2d2d2;"></div>
<span class="t" style="left:357.32px;top:133px;font-size:7.3px;color:#444;transform:scaleX(1.0000);-webkit-text-stroke:.1px currentColor;">F</span>
<div style="position:absolute;left:400.10px;top:132.60px;width:0.70px;height:8.00px;background:#d2d2d2;"></div>
<span class="t" style="left:424.91px;top:133px;font-size:7.3px;color:#444;transform:scaleX(1.0000);-webkit-text-stroke:.1px currentColor;">G</span>
<div style="position:absolute;left:454.20px;top:132.60px;width:0.70px;height:8.00px;background:#d2d2d2;"></div>
<span class="t" style="left:477.71px;top:133px;font-size:7.3px;color:#444;transform:scaleX(1.0000);-webkit-text-stroke:.1px currentColor;">H</span>
<div style="position:absolute;left:505.30px;top:132.60px;width:0.70px;height:8.00px;background:#d2d2d2;"></div>
<span class="t" style="left:541.24px;top:133px;font-size:7.3px;color:#444;transform:scaleX(1.0000);-webkit-text-stroke:.1px currentColor;">I</span>
<div style="position:absolute;left:578.00px;top:132.60px;width:0.70px;height:8.00px;background:#d2d2d2;"></div>
<span class="t" style="left:582.72px;top:133px;font-size:7.3px;color:#444;transform:scaleX(1.0000);-webkit-text-stroke:.1px currentColor;">J</span>
<div style="position:absolute;left:589.90px;top:132.60px;width:0.70px;height:8.00px;background:#d2d2d2;"></div>
<span class="t" style="left:604.32px;top:133px;font-size:7.3px;color:#444;transform:scaleX(1.0000);-webkit-text-stroke:.1px currentColor;">K</span>
<div style="position:absolute;left:622.40px;top:132.60px;width:0.70px;height:8.00px;background:#d2d2d2;"></div>
<span class="t" style="left:637.17px;top:133px;font-size:7.3px;color:#444;transform:scaleX(1.0000);-webkit-text-stroke:.1px currentColor;">L</span>
<div style="position:absolute;left:654.80px;top:132.60px;width:0.70px;height:8.00px;background:#d2d2d2;"></div>
<span class="t" style="left:668.71px;top:133px;font-size:7.3px;color:#444;transform:scaleX(1.0000);-webkit-text-stroke:.1px currentColor;">M</span>
<div style="position:absolute;left:687.50px;top:132.60px;width:0.70px;height:8.00px;background:#d2d2d2;"></div>
<span class="t" style="left:701.81px;top:133px;font-size:7.3px;color:#444;transform:scaleX(1.0000);-webkit-text-stroke:.1px currentColor;">N</span>
<div style="position:absolute;left:720.20px;top:132.60px;width:0.70px;height:8.00px;background:#d2d2d2;"></div>
<span class="t" style="left:734.16px;top:133px;font-size:7.3px;color:#444;transform:scaleX(1.0000);-webkit-text-stroke:.1px currentColor;">O</span>
<div style="position:absolute;left:752.60px;top:132.60px;width:0.70px;height:8.00px;background:#d2d2d2;"></div>
<span class="t" style="left:767.02px;top:133px;font-size:7.3px;color:#444;transform:scaleX(1.0000);-webkit-text-stroke:.1px currentColor;">P</span>
<div style="position:absolute;left:785.10px;top:132.60px;width:0.70px;height:8.00px;background:#d2d2d2;"></div>
<span class="t" style="left:799.11px;top:133px;font-size:7.3px;color:#444;transform:scaleX(1.0000);-webkit-text-stroke:.1px currentColor;">Q</span>
<div style="position:absolute;left:817.60px;top:132.60px;width:0.70px;height:8.00px;background:#d2d2d2;"></div>
<span class="t" style="left:831.76px;top:133px;font-size:7.3px;color:#444;transform:scaleX(1.0000);-webkit-text-stroke:.1px currentColor;">R</span>
<div style="position:absolute;left:850.00px;top:132.60px;width:0.70px;height:8.00px;background:#d2d2d2;"></div>
<span class="t" style="left:864.42px;top:133px;font-size:7.3px;color:#444;transform:scaleX(1.0000);-webkit-text-stroke:.1px currentColor;">S</span>
<div style="position:absolute;left:882.50px;top:132.60px;width:0.70px;height:8.00px;background:#d2d2d2;"></div>
<span class="t" style="left:897.07px;top:133px;font-size:7.3px;color:#444;transform:scaleX(1.0000);-webkit-text-stroke:.1px currentColor;">T</span>
<div style="position:absolute;left:914.90px;top:132.60px;width:0.70px;height:8.00px;background:#d2d2d2;"></div>
<span class="t" style="left:929.11px;top:133px;font-size:7.3px;color:#444;transform:scaleX(1.0000);-webkit-text-stroke:.1px currentColor;">U</span>
<div style="position:absolute;left:947.40px;top:132.60px;width:0.70px;height:8.00px;background:#d2d2d2;"></div>
<span class="t" style="left:961.82px;top:133px;font-size:7.3px;color:#444;transform:scaleX(1.0000);-webkit-text-stroke:.1px currentColor;">V</span>
<div style="position:absolute;left:979.90px;top:132.60px;width:0.70px;height:8.00px;background:#d2d2d2;"></div>
<span class="t" style="left:993.11px;top:133px;font-size:7.3px;color:#444;transform:scaleX(1.0000);-webkit-text-stroke:.1px currentColor;">W</span>
<div style="position:absolute;left:1012.00px;top:132.60px;width:0.70px;height:8.00px;background:#d2d2d2;"></div>
<div style="position:absolute;left:0.00px;top:160.35px;width:13.20px;height:0.70px;background:#cfcfcf;"></div>
<span class="t" style="left:4.97px;top:153px;font-size:8.1px;color:#444;transform:scaleX(0.8588);-webkit-text-stroke:.1px currentColor;">6</span>
<div style="position:absolute;left:0.00px;top:187.05px;width:13.20px;height:0.70px;background:#cfcfcf;"></div>
<span class="t" style="left:4.97px;top:180px;font-size:8.2px;color:#444;transform:scaleX(0.8483);-webkit-text-stroke:.1px currentColor;">7</span>
<div style="position:absolute;left:0.00px;top:197.15px;width:13.20px;height:0.70px;background:#cfcfcf;"></div>
<span class="t" style="left:4.97px;top:190px;font-size:8.2px;color:#444;transform:scaleX(0.8483);-webkit-text-stroke:.1px currentColor;">8</span>
<div style="position:absolute;left:0.00px;top:206.35px;width:13.20px;height:0.70px;background:#cfcfcf;"></div>
<span class="t" style="left:4.97px;top:199px;font-size:8.1px;color:#444;transform:scaleX(0.8588);-webkit-text-stroke:.1px currentColor;">9</span>
<div style="position:absolute;left:0.00px;top:214.75px;width:13.20px;height:0.70px;background:#cfcfcf;"></div>
<span class="t" style="left:3.03px;top:207px;font-size:8.1px;color:#444;transform:scaleX(0.8588);-webkit-text-stroke:.1px currentColor;">10</span>
<div style="position:absolute;left:0.00px;top:223.27px;width:13.20px;height:0.70px;background:#cfcfcf;"></div>
<span class="t" style="left:3.29px;top:216px;font-size:8.2px;color:#444;transform:scaleX(0.8483);-webkit-text-stroke:.1px currentColor;">11</span>
<div style="position:absolute;left:0.00px;top:231.79px;width:13.20px;height:0.70px;background:#cfcfcf;"></div>
<span class="t" style="left:3.03px;top:224px;font-size:8.1px;color:#444;transform:scaleX(0.8588);-webkit-text-stroke:.1px currentColor;">12</span>
<div style="position:absolute;left:0.00px;top:240.32px;width:13.20px;height:0.70px;background:#cfcfcf;"></div>
<span class="t" style="left:3.03px;top:233px;font-size:8.1px;color:#444;transform:scaleX(0.8588);-webkit-text-stroke:.1px currentColor;">13</span>
<div style="position:absolute;left:0.00px;top:248.84px;width:13.20px;height:0.70px;background:#cfcfcf;"></div>
<span class="t" style="left:3.03px;top:242px;font-size:8.2px;color:#444;transform:scaleX(0.8483);-webkit-text-stroke:.1px currentColor;">14</span>
<div style="position:absolute;left:0.00px;top:257.36px;width:13.20px;height:0.70px;background:#cfcfcf;"></div>
<span class="t" style="left:3.03px;top:250px;font-size:8.1px;color:#444;transform:scaleX(0.8588);-webkit-text-stroke:.1px currentColor;">15</span>
<div style="position:absolute;left:0.00px;top:265.88px;width:13.20px;height:0.70px;background:#cfcfcf;"></div>
<span class="t" style="left:3.03px;top:259px;font-size:8.2px;color:#444;transform:scaleX(0.8483);-webkit-text-stroke:.1px currentColor;">16</span>
<div style="position:absolute;left:0.00px;top:274.41px;width:13.20px;height:0.70px;background:#cfcfcf;"></div>
<span class="t" style="left:3.03px;top:267px;font-size:8.1px;color:#444;transform:scaleX(0.8588);-webkit-text-stroke:.1px currentColor;">17</span>
<div style="position:absolute;left:0.00px;top:282.93px;width:13.20px;height:0.70px;background:#cfcfcf;"></div>
<span class="t" style="left:3.03px;top:276px;font-size:8.2px;color:#444;transform:scaleX(0.8483);-webkit-text-stroke:.1px currentColor;">18</span>
<div style="position:absolute;left:0.00px;top:291.45px;width:13.20px;height:0.70px;background:#cfcfcf;"></div>
<span class="t" style="left:3.03px;top:284px;font-size:8.1px;color:#444;transform:scaleX(0.8588);-webkit-text-stroke:.1px currentColor;">19</span>
<div style="position:absolute;left:0.00px;top:299.97px;width:13.20px;height:0.70px;background:#cfcfcf;"></div>
<span class="t" style="left:3.03px;top:293px;font-size:8.2px;color:#444;transform:scaleX(0.8483);-webkit-text-stroke:.1px currentColor;">20</span>
<div style="position:absolute;left:0.00px;top:308.50px;width:13.20px;height:0.70px;background:#cfcfcf;"></div>
<span class="t" style="left:3.03px;top:301px;font-size:8.1px;color:#444;transform:scaleX(0.8588);-webkit-text-stroke:.1px currentColor;">21</span>
<div style="position:absolute;left:0.00px;top:317.02px;width:13.20px;height:0.70px;background:#cfcfcf;"></div>
<span class="t" style="left:3.03px;top:310px;font-size:8.2px;color:#444;transform:scaleX(0.8483);-webkit-text-stroke:.1px currentColor;">22</span>
<div style="position:absolute;left:0.00px;top:325.54px;width:13.20px;height:0.70px;background:#cfcfcf;"></div>
<span class="t" style="left:3.03px;top:318px;font-size:8.1px;color:#444;transform:scaleX(0.8588);-webkit-text-stroke:.1px currentColor;">23</span>
<div style="position:absolute;left:0.00px;top:334.06px;width:13.20px;height:0.70px;background:#cfcfcf;"></div>
<span class="t" style="left:3.03px;top:327px;font-size:8.2px;color:#444;transform:scaleX(0.8483);-webkit-text-stroke:.1px currentColor;">24</span>
<div style="position:absolute;left:0.00px;top:342.59px;width:13.20px;height:0.70px;background:#cfcfcf;"></div>
<span class="t" style="left:3.03px;top:335px;font-size:8.1px;color:#444;transform:scaleX(0.8588);-webkit-text-stroke:.1px currentColor;">25</span>
<div style="position:absolute;left:0.00px;top:351.11px;width:13.20px;height:0.70px;background:#cfcfcf;"></div>
<span class="t" style="left:3.03px;top:344px;font-size:8.2px;color:#444;transform:scaleX(0.8483);-webkit-text-stroke:.1px currentColor;">26</span>
<div style="position:absolute;left:0.00px;top:359.63px;width:13.20px;height:0.70px;background:#cfcfcf;"></div>
<span class="t" style="left:3.03px;top:352px;font-size:8.1px;color:#444;transform:scaleX(0.8588);-webkit-text-stroke:.1px currentColor;">27</span>
<div style="position:absolute;left:0.00px;top:368.15px;width:13.20px;height:0.70px;background:#cfcfcf;"></div>
<span class="t" style="left:3.03px;top:361px;font-size:8.2px;color:#444;transform:scaleX(0.8483);-webkit-text-stroke:.1px currentColor;">28</span>
<div style="position:absolute;left:0.00px;top:376.68px;width:13.20px;height:0.70px;background:#cfcfcf;"></div>
<span class="t" style="left:3.03px;top:369px;font-size:8.1px;color:#444;transform:scaleX(0.8588);-webkit-text-stroke:.1px currentColor;">29</span>
<div style="position:absolute;left:0.00px;top:385.20px;width:13.20px;height:0.70px;background:#cfcfcf;"></div>
<span class="t" style="left:3.03px;top:378px;font-size:8.2px;color:#444;transform:scaleX(0.8483);-webkit-text-stroke:.1px currentColor;">30</span>
<div style="position:absolute;left:0.00px;top:393.72px;width:13.20px;height:0.70px;background:#cfcfcf;"></div>
<span class="t" style="left:3.03px;top:386px;font-size:8.1px;color:#444;transform:scaleX(0.8588);-webkit-text-stroke:.1px currentColor;">31</span>
<div style="position:absolute;left:0.00px;top:402.25px;width:13.20px;height:0.70px;background:#cfcfcf;"></div>
<span class="t" style="left:3.03px;top:395px;font-size:8.2px;color:#444;transform:scaleX(0.8483);-webkit-text-stroke:.1px currentColor;">32</span>
<div style="position:absolute;left:0.00px;top:410.77px;width:13.20px;height:0.70px;background:#cfcfcf;"></div>
<span class="t" style="left:3.03px;top:403px;font-size:8.1px;color:#444;transform:scaleX(0.8588);-webkit-text-stroke:.1px currentColor;">33</span>
<div style="position:absolute;left:0.00px;top:419.29px;width:13.20px;height:0.70px;background:#cfcfcf;"></div>
<span class="t" style="left:3.03px;top:412px;font-size:8.1px;color:#444;transform:scaleX(0.8588);-webkit-text-stroke:.1px currentColor;">34</span>
<div style="position:absolute;left:0.00px;top:427.81px;width:13.20px;height:0.70px;background:#cfcfcf;"></div>
<span class="t" style="left:3.03px;top:421px;font-size:8.2px;color:#444;transform:scaleX(0.8483);-webkit-text-stroke:.1px currentColor;">35</span>
<div style="position:absolute;left:0.00px;top:436.34px;width:13.20px;height:0.70px;background:#cfcfcf;"></div>
<span class="t" style="left:3.03px;top:429px;font-size:8.1px;color:#444;transform:scaleX(0.8588);-webkit-text-stroke:.1px currentColor;">36</span>
<div style="position:absolute;left:0.00px;top:444.86px;width:13.20px;height:0.70px;background:#cfcfcf;"></div>
<span class="t" style="left:3.03px;top:438px;font-size:8.2px;color:#444;transform:scaleX(0.8483);-webkit-text-stroke:.1px currentColor;">37</span>
<div style="position:absolute;left:0.00px;top:453.38px;width:13.20px;height:0.70px;background:#cfcfcf;"></div>
<span class="t" style="left:3.03px;top:446px;font-size:8.1px;color:#444;transform:scaleX(0.8588);-webkit-text-stroke:.1px currentColor;">38</span>
<div style="position:absolute;left:0.00px;top:461.90px;width:13.20px;height:0.70px;background:#cfcfcf;"></div>
<span class="t" style="left:3.03px;top:455px;font-size:8.2px;color:#444;transform:scaleX(0.8483);-webkit-text-stroke:.1px currentColor;">39</span>
<div style="position:absolute;left:0.00px;top:470.42px;width:13.20px;height:0.70px;background:#cfcfcf;"></div>
<span class="t" style="left:3.03px;top:463px;font-size:8.1px;color:#444;transform:scaleX(0.8588);-webkit-text-stroke:.1px currentColor;">40</span>
<div style="position:absolute;left:0.00px;top:478.95px;width:13.20px;height:0.70px;background:#cfcfcf;"></div>
<span class="t" style="left:3.03px;top:472px;font-size:8.2px;color:#444;transform:scaleX(0.8483);-webkit-text-stroke:.1px currentColor;">41</span>
<div style="position:absolute;left:0.00px;top:487.47px;width:13.20px;height:0.70px;background:#cfcfcf;"></div>
<span class="t" style="left:3.03px;top:480px;font-size:8.1px;color:#444;transform:scaleX(0.8588);-webkit-text-stroke:.1px currentColor;">42</span>
<div style="position:absolute;left:0.00px;top:495.99px;width:13.20px;height:0.70px;background:#cfcfcf;"></div>
<span class="t" style="left:3.03px;top:489px;font-size:8.2px;color:#444;transform:scaleX(0.8483);-webkit-text-stroke:.1px currentColor;">43</span>
<div style="position:absolute;left:0.00px;top:504.51px;width:13.20px;height:0.70px;background:#cfcfcf;"></div>
<span class="t" style="left:3.03px;top:497px;font-size:8.1px;color:#444;transform:scaleX(0.8588);-webkit-text-stroke:.1px currentColor;">44</span>
<div style="position:absolute;left:0.00px;top:513.04px;width:13.20px;height:0.70px;background:#cfcfcf;"></div>
<span class="t" style="left:3.03px;top:506px;font-size:8.2px;color:#444;transform:scaleX(0.8483);-webkit-text-stroke:.1px currentColor;">45</span>
<span class="t" style="left:3.03px;top:514px;font-size:8.1px;color:#444;transform:scaleX(0.8588);-webkit-text-stroke:.1px currentColor;">46</span>
<span class="t" style="left:171.50px;top:153px;font-size:7.7px;color:#2a2a2a;transform:scaleX(0.9031);">Select the downloaded Justification Report text(.txt) file</span>
<div style="position:absolute;left:166.10px;top:166.80px;width:211.60px;height:15.00px;background:#fff;box-sizing:border-box;border-top:1px solid #7e7e7e;border-left:1px solid #8c8c8c;border-right:1px solid #e9e9e9;border-bottom:1px solid #e9e9e9;"></div>
<span class="t" style="left:171.70px;top:171px;font-size:6.6px;color:#b4b4b4;transform:scaleX(0.9637);">D:\Please  select  JR  File.txt</span>
<span class="t" style="left:171.30px;top:199px;font-size:7.7px;color:#2a2a2a;transform:scaleX(0.9082);">Please click on the Browse button if you want to change the location</span>
<div style="position:absolute;left:166.40px;top:211.00px;width:213.80px;height:14.80px;background:#fff;box-sizing:border-box;border-top:1px solid #7e7e7e;border-left:1px solid #8c8c8c;border-right:1px solid #e9e9e9;border-bottom:1px solid #e9e9e9;"></div>
<span class="t" style="left:171.70px;top:215px;font-size:6.6px;color:#b8b8b8;transform:scaleX(0.8939);">D:</span>
<div style="position:absolute;left:395.00px;top:161.20px;width:101.80px;height:22.20px;background:#f0f0f0;box-sizing:border-box;border-top:.8px solid #fbfbfb;border-left:.8px solid #fbfbfb;border-right:1.3px solid #808080;border-bottom:1.4px solid #808080;box-shadow:.5px .6px 0 #c8c8c8;"></div>
<span class="t" style="left:433.20px;top:168px;font-size:7.4px;color:#1e1e1e;transform:scaleX(0.9848);">Browse</span>
<div style="position:absolute;left:395.60px;top:206.60px;width:104.20px;height:21.40px;background:#f0f0f0;box-sizing:border-box;border-top:.8px solid #fbfbfb;border-left:.8px solid #fbfbfb;border-right:1.3px solid #808080;border-bottom:1.4px solid #808080;box-shadow:.5px .6px 0 #c8c8c8;"></div>
<span class="t" style="left:434.90px;top:214px;font-size:7.4px;color:#1e1e1e;transform:scaleX(0.9848);">Browse</span>
<div style="position:absolute;left:198.90px;top:259.60px;width:83.00px;height:16.70px;background:#f0f0f0;box-sizing:border-box;border-top:.8px solid #fbfbfb;border-left:.8px solid #fbfbfb;border-right:1.3px solid #808080;border-bottom:1.4px solid #808080;box-shadow:.5px .6px 0 #c8c8c8;"></div>
<span class="t" style="left:215.00px;top:265px;font-size:7.1px;color:#1e1e1e;transform:scaleX(0.9530);">Generate Report</span>
<div style="position:absolute;left:317.20px;top:259.00px;width:56.00px;height:17.30px;background:#f0f0f0;box-sizing:border-box;border-top:.8px solid #fbfbfb;border-left:.8px solid #fbfbfb;border-right:1.3px solid #808080;border-bottom:1.4px solid #808080;box-shadow:.5px .6px 0 #c8c8c8;"></div>
<span class="t" style="left:337.00px;top:265px;font-size:7.1px;color:#1e1e1e;transform:scaleX(0.9253);">Clear</span>
<div style="position:absolute;left:1012.40px;top:129.20px;width:11.60px;height:392.00px;background:#f0f0f0;"></div>
<svg style="position:absolute;left:1015.80px;top:135.40px;" width="4.60" height="3.00" viewBox="0 0 4.6 3"><path d="M2.3 0L4.6 3H0Z" fill="#666"/></svg>
<svg style="position:absolute;left:1015.80px;top:515.60px;" width="4.60" height="3.00" viewBox="0 0 4.6 3"><path d="M0 0H4.6L2.3 3Z" fill="#666"/></svg>
<div style="position:absolute;left:1016.00px;top:219.60px;width:4.40px;height:292.40px;background:#6e6e6e;border-radius:2.2px;"></div>
<div style="position:absolute;left:0.00px;top:521.20px;width:1024.00px;height:17.00px;background:#e9e9e9;"></div>
<svg style="position:absolute;left:15.40px;top:527.00px;" width="3.20" height="5.40" viewBox="0 0 3.2 5.4"><path d="M2.6 .5L.6 2.7L2.6 4.9" fill="none" stroke="#bdbdbd" stroke-width=".8"/></svg>
<svg style="position:absolute;left:33.00px;top:527.00px;" width="3.20" height="5.40" viewBox="0 0 3.2 5.4"><path d="M.6 .5L2.6 2.7L.6 4.9" fill="none" stroke="#bdbdbd" stroke-width=".8"/></svg>
<div style="position:absolute;left:61.80px;top:521.20px;width:36.60px;height:15.40px;background:#fff;border-radius:0 0 2.5px 2.5px;"></div>
<span class="t" style="left:66.00px;top:525px;font-size:7.2px;color:#333;transform:scaleX(1.0142);font-weight:bold;-webkit-text-stroke:0;">ReadMe</span>
<div style="position:absolute;left:66.20px;top:533.20px;width:27.80px;height:1.00px;background:#4a8565;"></div>
<svg style="position:absolute;left:122.80px;top:526.20px;" width="6.80" height="6.80" viewBox="0 0 6.8 6.8"><path d="M3.4 .2V6.6M.2 3.4H6.6" stroke="#4a4a4a" stroke-width=".8"/></svg>
<div style="position:absolute;left:810.60px;top:527.40px;width:0.90px;height:0.90px;background:#666;"></div>
<div style="position:absolute;left:810.60px;top:529.40px;width:0.90px;height:0.90px;background:#666;"></div>
<div style="position:absolute;left:810.60px;top:531.40px;width:0.90px;height:0.90px;background:#666;"></div>
<svg style="position:absolute;left:822.60px;top:527.20px;" width="3.00" height="4.60" viewBox="0 0 3 4.6"><path d="M3 0V4.6L0 2.3Z" fill="#555"/></svg>
<svg style="position:absolute;left:1007.60px;top:527.20px;" width="3.00" height="4.60" viewBox="0 0 3 4.6"><path d="M0 0V4.6L3 2.3Z" fill="#555"/></svg>
<div style="position:absolute;left:828.80px;top:527.00px;width:175.20px;height:5.00px;background:#6a6a6a;border-radius:2.5px;"></div>
<div style="position:absolute;left:0.00px;top:538.20px;width:1024.00px;height:11.80px;background:#f3f3f3;"></div>
<div style="position:absolute;left:0.00px;top:538.00px;width:1024.00px;height:0.60px;background:#dcdcdc;"></div>
<span class="t" style="left:6.20px;top:543px;font-size:5.9px;color:#4a4a4a;transform:scaleX(0.9264);">Ready</span>
<svg style="position:absolute;left:33.00px;top:541.00px;" width="8.00" height="7.00" viewBox="0 0 8 7"><rect x=".3" y=".3" width="7.2" height="6.2" fill="#8c8c8c" stroke="#5e5e5e" stroke-width=".6"/><path d="M.4 2.1H7.4M2.6 .4V2.1M5 .4V2.1" stroke="#e4e4e4" stroke-width=".5"/><circle cx="5.2" cy="4.4" r="1.3" fill="#4a4a4a"/></svg>
<svg style="position:absolute;left:50.00px;top:540.60px;" width="7.60" height="7.60" viewBox="0 0 7.6 7.6"><circle cx="3.4" cy="1.2" r=".9" fill="none" stroke="#555" stroke-width=".6"/><path d="M.6 2.8L3.4 3.4L6.2 2.8M3.4 3.4V5M3.4 5L1.8 7.2M3.4 5L4.6 6.2" fill="none" stroke="#555" stroke-width=".6"/><circle cx="5.8" cy="5.8" r="1.4" fill="none" stroke="#555" stroke-width=".55"/></svg>
<span class="t" style="left:59.80px;top:543px;font-size:5.9px;color:#4a4a4a;transform:scaleX(1.0069);">Accessibility: Unavailable</span>
<div style="position:absolute;left:868.00px;top:538.40px;width:19.00px;height:11.60px;background:#d9d9d9;"></div>
<svg style="position:absolute;left:873.60px;top:541.00px;" width="7.60" height="6.60" viewBox="0 0 7.6 6.6"><rect x=".4" y=".4" width="6.8" height="5.8" fill="none" stroke="#4a4a4a" stroke-width=".7"/><path d="M2.7 .4V6.2M4.9 .4V6.2M.4 2.3H7.2M.4 4.3H7.2" stroke="#4a4a4a" stroke-width=".55"/></svg>
<svg style="position:absolute;left:895.20px;top:541.00px;" width="7.60" height="6.60" viewBox="0 0 7.6 6.6"><rect x=".4" y=".4" width="6.8" height="5.8" fill="none" stroke="#5a5a5a" stroke-width=".7"/><rect x="2" y="1.6" width="3.6" height="4.6" fill="none" stroke="#5a5a5a" stroke-width=".55"/></svg>
<svg style="position:absolute;left:917.00px;top:541.00px;" width="7.40" height="6.60" viewBox="0 0 7.4 6.6"><rect x=".4" y=".4" width="6.6" height="5.8" fill="none" stroke="#5a5a5a" stroke-width=".7"/><path d="M.4 3.8H3.4V.4M3.4 3.8H5.2V.4" fill="none" stroke="#5a5a5a" stroke-width=".55"/></svg>
<div style="position:absolute;left:934.80px;top:544.20px;width:2.80px;height:0.70px;background:#777;"></div>
<div style="position:absolute;left:942.00px;top:544.30px;width:52.40px;height:0.60px;background:#8a8a8a;"></div>
<div style="position:absolute;left:965.90px;top:541.20px;width:2.20px;height:6.20px;background:#555;border-radius:1px;"></div>
<svg style="position:absolute;left:996.80px;top:542.20px;" width="4.60" height="4.60" viewBox="0 0 4.6 4.6"><path d="M2.3 .3V4.3M.3 2.3H4.3" stroke="#666" stroke-width=".65"/></svg>
<span class="t" style="left:1008.90px;top:543px;font-size:5.8px;color:#505050;transform:scaleX(0.9390);-webkit-text-stroke:.05px currentColor;">95%</span>
</div>
</body></html>
